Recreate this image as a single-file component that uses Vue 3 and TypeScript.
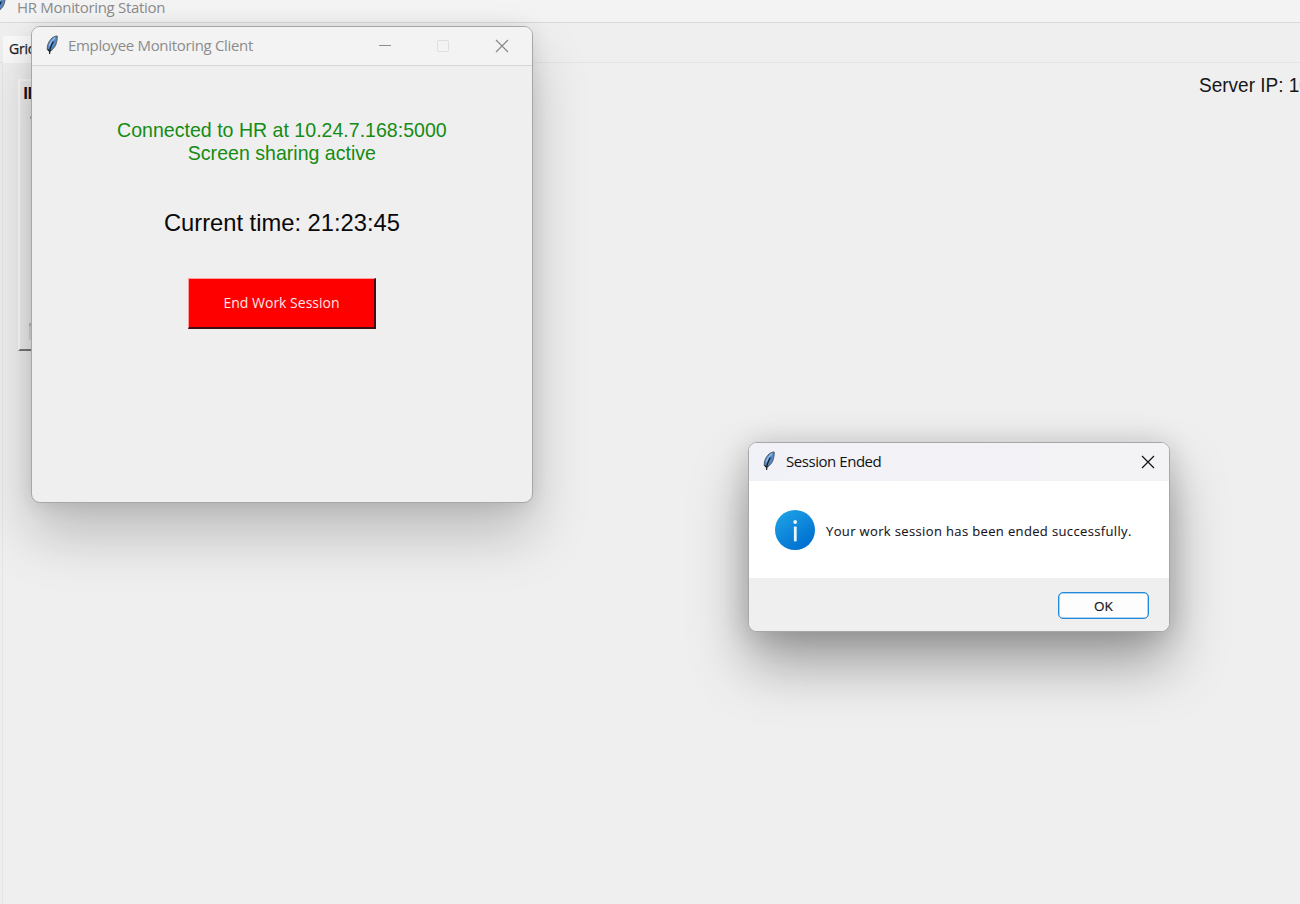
<script setup lang="ts">
import { ref } from 'vue'

const currentTime = ref('21:23:45')
const host = ref('10.24.7.168')
</script>

<template>
  <main class="desktop">
    <svg class="defs">
      <symbol id="feather" viewBox="0 0 12 20">
        <path d="M11.2 1C7.5 1.2 4.2 4 2.4 8.2 1.4 10.5 1 13 1.4 14.8l1.8 1.4c3-1 5.3-3.4 6.6-6.6 1-2.6 1.5-5.6 1.4-8.6z" fill="#5289c9" stroke="#50555c" />
        <path d="M9.2 2.6Q5 5.5 3.200 11" fill="none" stroke="#8fbbe8" stroke-width="1.300" />
        <path d="M7.400 6.500Q5.200 10 3.900 14.500L3.600 19" fill="none" stroke="#15191e" stroke-width="1.200" />
        <path d="M1.200 13.500l.9 2.300 1.500 1.400 2.600-2.400-2.500.2z" fill="#252a30" />
      </symbol>
    </svg>
    <header class="station-title">
      <svg class="feather clipped"><use href="#feather" /></svg>
      <span class="station-name">HR Monitoring Station</span>
    </header>
    <nav class="tabs"><span class="tab">Grid</span></nav>
    <section class="page">
      <div class="tile"><b>ID</b><i class="mark"></i><i class="thumb"></i></div>
      <div class="server"><span>Server IP: {{ host }}</span></div>
    </section>

    <section class="window client">
      <header class="bar">
        <svg class="feather"><use href="#feather" /></svg>
        <span class="client-name">Employee Monitoring Client</span>
        <div class="controls">
          <svg viewBox="0 0 14 14"><path d="M1 6.500h12" stroke="#8c8c8c" /></svg>
          <svg viewBox="0 0 14 14"><rect x="1.500" y="1.500" width="11" height="11" rx="1" fill="none" stroke="#dedede" /></svg>
          <svg viewBox="0 0 14 14"><path d="M1 1l12 12M13 1L1 13" stroke="#868686" stroke-width="1.100" /></svg>
        </div>
      </header>
      <div class="body">
        <p class="status">Connected to HR at {{ host }}:5000<br />Screen sharing active</p>
        <p class="clock">Current time: {{ currentTime }}</p>
        <button class="end"><span>End Work Session</span></button>
      </div>
    </section>

    <section class="window dialog">
      <header class="bar">
        <svg class="feather"><use href="#feather" /></svg>
        <span class="dialog-name">Session Ended</span>
        <svg class="close" viewBox="0 0 14 14"><path d="M1 1l12 12M13 1L1 13" stroke="#111" stroke-width="1.200" /></svg>
      </header>
      <div class="message">
        <svg class="info" viewBox="0 0 40 40">
          <defs><linearGradient id="blue" x1="0" y1="0" x2=".7" y2="1"><stop offset=".1" stop-color="#1ea1e5" /><stop offset=".95" stop-color="#0071d2" /></linearGradient></defs>
          <circle cx="20" cy="20" r="20" fill="url(#blue)" />
          <circle cx="20.200" cy="12" r="1.900" fill="#e9f5fd" />
          <rect x="18.900" y="16.400" width="2.800" height="15" rx=".8" fill="#e9f5fd" />
        </svg>
        <span class="msg">Your work session has been ended successfully.</span>
      </div>
      <footer class="actions"><button class="ok">OK</button></footer>
    </section>
  </main>
</template>

<style>
html, body { margin: 0; overflow: hidden; }
</style>

<style scoped>
* { box-sizing: border-box; }
.desktop { position: relative; width: 1300px; height: 904px; overflow: hidden; background: #efefef; font-family: "Open Sans", "Noto Sans", sans-serif; display: flex; flex-direction: column; }
.defs { position: absolute; width: 0; height: 0; }
.station-title { height: 23px; flex: none; background: #f3f3f3; border-bottom: 1px solid #d9d9d9; display: flex; align-items: flex-start; white-space: nowrap; }
.feather { width: 12px; height: 20px; flex: none; display: block; }
.clipped { margin: -5px 11px 0 -6px; }
.station-name { font-size: 15px; line-height: 16px; margin-top: -1px; color: #8b8b8b; letter-spacing: -.3px; }
.tabs { height: 40px; flex: none; padding: 13px 0 0 3px; border-bottom: 1px solid #e4e4e4; }
.tab { display: block; width: 44px; height: 27px; padding-left: 6px; background: #f9f9f9; font-size: 14px; line-height: 26px; color: #222; letter-spacing: -.2px; -webkit-text-stroke: .25px #222; }
.page { flex: 1; display: flex; justify-content: space-between; align-items: flex-start; margin-left: 2px; padding: 16px 0 0 15px; border-left: 1px solid #e5e5e5; }
.tile { width: 80px; height: 272px; border-top: 2px solid #f8f8f8; border-left: 2px solid #fcfcfc; border-bottom: 2px solid #777; display: flex; flex-direction: column; padding: 1px 0 0 3px; }
.tile b { font: bold 16px/22px "Open Sans", sans-serif; letter-spacing: -1px; color: #19151d; height: 34px; }
.mark { width: 4px; height: 3px; margin-left: 7px; background: #a9b3c0; }
.thumb { width: 8px; height: 17px; margin: 204px 0 0 6px; background: #d7d8dc; border-top: 3px solid #bbb; }
.server { width: 101px; overflow: hidden; white-space: nowrap; font: 21px/24px "Liberation Sans", Arial, sans-serif; color: #161616; margin-top: -6px; }
.server span { display: inline-block; transform: scaleX(.905); transform-origin: left; }
.window { position: absolute; border: 1px solid #a7a7a7; border-radius: 9px; display: flex; flex-direction: column; }
.client { left: 31px; top: 26px; width: 502px; height: 477px; background: #efefef; box-shadow: 0 32px 56px rgba(0,0,0,.21), 0 2px 20px rgba(0,0,0,.1); }
.dialog { left: 748px; top: 442px; width: 422px; height: 190px; background: #fff; box-shadow: 0 32px 56px rgba(0,0,0,.34), 0 2px 30px rgba(0,0,0,.16); }
.bar { flex: none; height: 39px; padding: 0 0 1px 14px; display: flex; align-items: center; border-radius: 8px 8px 0 0; background: #f3f3f3; white-space: nowrap; }
.client .bar { border-bottom: 1px solid #d7d7d7; padding-bottom: 0; }
.client .bar .feather { margin-top: -2px; }
.client-name { margin: -2px 0 0 10px; font-size: 15px; color: #8c8c8c; letter-spacing: -.33px; }
.controls { margin-left: auto; display: flex; gap: 44px; margin-right: 23px; }
.controls svg { width: 14px; height: 14px; display: block; }
.controls svg:first-child { margin-right: 1px; }
.controls svg:nth-child(2) { margin: 0 1px 0 -1px; }
.dialog .bar { height: 38px; background: linear-gradient(90deg, #f1f1f8, #f3f3f5); }
.dialog .feather { margin-top: -1px; }
.dialog-name { margin: -2px 0 0 11px; font-size: 15px; color: #111; letter-spacing: -.45px; }
.close { width: 14px; height: 14px; margin: 1px 14px 0 auto; }
.body { flex: 1; display: flex; flex-direction: column; align-items: center; padding-top: 52px; }
p { margin: 0; text-align: center; white-space: nowrap; font-family: "Liberation Sans", Arial, sans-serif; }
.status { font-size: 21px; line-height: 23px; color: #148c14; transform: scaleX(.932); }
.clock { margin-top: 46px; font-size: 24px; line-height: 26px; color: #080808; transform: translateX(-.5px) scaleX(.988); }
.end { width: 188px; height: 51px; margin-top: 42px; padding: 0; background: #f00; color: #ffe7e7; border: 2px solid; border-width: 1px 2px 2px 1px; border-color: #ff9c9c #401010 #401010 #ff9c9c; font: 14px/20px "Open Sans", sans-serif; }
.message { height: 97px; display: flex; align-items: center; padding-left: 26px; }
.info { width: 40px; height: 40px; flex: none; }
.msg { margin: 3px 0 0 11px; font-size: 13px; letter-spacing: .36px; color: #16131c; white-space: nowrap; -webkit-text-stroke: .1px #16131c; }
.actions { flex: 1; background: #efefef; border-radius: 0 0 8px 8px; display: flex; justify-content: flex-end; padding: 14px 20px 0 0; }
.ok { width: 91px; height: 27px; padding: 1px 0 0; background: #fdfdfd; border: 1px solid #2389d8; box-shadow: inset 0 0 0 .5px #5aa9e2; border-radius: 5px; font: 13.5px/20px "Open Sans", sans-serif; color: #151515; -webkit-text-stroke: .2px #151515; }
</style>
